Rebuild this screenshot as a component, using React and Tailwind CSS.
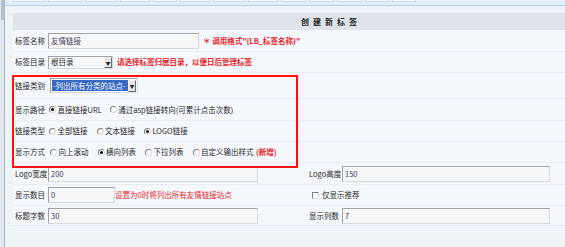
const tabs = [32, 34, 32, 30, 24, 30, 32, 30, 25, 25, 25, 24, 24]

function Radio({ checked }) {
  return (
    <span className="inline-flex h-[7px] w-[7px] shrink-0 items-center justify-center rounded-full border border-[#7d7d7d] border-b-[#dcdcdc] border-r-[#dcdcdc] bg-white">
      {checked && <span className="h-[3px] w-[3px] rounded-full bg-black" />}
    </span>
  )
}

function Option({ checked, children }) {
  return (
    <span className="flex items-center gap-[1.5px]">
      <Radio checked={checked} />
      <span>{children}</span>
    </span>
  )
}

function Input({ value, w }) {
  return (
    <div className={`flex h-[16px] items-center border border-[#9ea5ab] border-b-[#d5d8db] border-r-[#d5d8db] bg-[#f7f7f7] pl-[2px] text-[#4a3a5a] ${w}`}>
      {value}
    </div>
  )
}

function Row({ label, h, children, line = true }) {
  return (
    <div className={`flex items-center pl-[2px] ${h} ${line ? 'border-b border-[#e7edf3]' : ''}`}>
      <span className="w-[33px] shrink-0 whitespace-nowrap">{label}</span>
      {children}
    </div>
  )
}

export default function App() {
  return (
    <div
      className="relative flex h-[247px] w-[565px] overflow-hidden bg-[#eef3f8] text-[7.5px] leading-none text-[#2a2a2a]"
      style={{ fontFamily: '"Noto Sans CJK SC", "Noto Sans", sans-serif' }}
    >
      {/* left strip */}
      <div className="w-[5px] shrink-0 border-r border-[#aab6c2] bg-[#dfe6ed]">
        <div className="mx-auto h-[20px] w-[3px] bg-[#b4bec8]" />
      </div>

      <div className="flex flex-1 flex-col">
        {/* tab strip */}
        <div className="flex h-[6px] gap-[3px] border-b border-[#b3cfe6] bg-[#e3eef8] pl-[8px]">
          {tabs.map((w, i) => (
            <div key={i} className="h-[2px] border-x border-b border-[#c9dcec] bg-[#f4f8fc]" style={{ width: w }} />
          ))}
        </div>
        <div className="h-[6px]" />

        {/* form table */}
        <div className="ml-[8px] w-[600px] bg-[#f4f7fb]">
          <div className="flex h-[18px] items-center justify-center border-t border-[#eef1f4] bg-[#dde3e8] pl-[36px] text-[8px] font-bold tracking-[4px] text-[#222]">
            创建新标签
          </div>

          <Row label="标签名称" h="h-[22px]">
            <Input value="友情链接" w="w-[151px]" />
            <span className="ml-[4px] font-bold text-[#e8262a]">＊ 调用格式"{'{'}LB_标签名称{'}'}"</span>
          </Row>

          <Row label="标签目录" h="h-[21px]">
            <div className="flex h-[13px] w-[65px] items-center border border-[#9ea5ab] border-b-[#d5d8db] border-r-[#d5d8db] bg-[#f7f7f7]">
              <span className="flex-1 pl-[2px]">根目录</span>
              <span className="flex h-[11px] w-[8px] items-center justify-center border border-[#f4f4f4] border-b-[#6e6e6e] border-r-[#6e6e6e] bg-[#e4e4e4] text-[5px]">▼</span>
            </div>
            <span className="ml-[4px] font-bold text-[#e8262a]">请选择标签归属目录，以便日后管理标签</span>
          </Row>

          <Row label="链接类别" h="h-[26px]">
            <div className="ml-[2px] flex h-[15px] w-[88px] items-center border border-[#9ea5ab] border-b-[#d5d8db] border-r-[#d5d8db] bg-white p-[1px]">
              <span className="flex h-full flex-1 items-center whitespace-nowrap bg-[#3568c4] pl-[1px] text-white">-列出所有分类的站点-</span>
              <span className="flex h-[12px] w-[8px] items-center justify-center border border-[#f4f4f4] border-b-[#6e6e6e] border-r-[#6e6e6e] bg-[#e4e4e4] text-[5px]">▼</span>
            </div>
          </Row>

          <Row label="显示路径" h="h-[22px]">
            <div className="ml-[1px] flex items-center gap-[8px]">
              <Option checked>直接链接URL</Option>
              <Option>通过asp链接转向(可累计点击次数)</Option>
            </div>
          </Row>

          <Row label="链接类型" h="h-[21px]">
            <div className="ml-[1px] flex items-center gap-[9px]">
              <Option>全部链接</Option>
              <Option>文本链接</Option>
              <Option checked>LOGO链接</Option>
            </div>
          </Row>

          <Row label="显示方式" h="h-[21px]">
            <div className="ml-[2px] flex items-center gap-[9px]">
              <Option>向上滚动</Option>
              <Option checked>横向列表</Option>
              <Option>下拉列表</Option>
              <span className="flex items-center gap-[1.5px]">
                <Radio />
                <span>自定义输出样式</span>
                <span className="ml-[1px] font-bold text-[#e8262a]">(新增)</span>
              </span>
            </div>
          </Row>

          <div className="flex h-[22px] items-center border-b border-[#e7edf3]">
            <div className="flex w-[294px] items-center pl-[2px]">
              <span className="w-[33px] shrink-0">Logo宽度</span>
              <Input value="200" w="w-[210px]" />
            </div>
            <div className="flex items-center pl-[2px]">
              <span className="w-[33px] shrink-0">Logo高度</span>
              <Input value="150" w="w-[208px]" />
            </div>
          </div>

          <div className="flex h-[21px] items-center border-b border-[#e7edf3]">
            <div className="flex w-[294px] items-center pl-[2px]">
              <span className="w-[33px] shrink-0">显示数目</span>
              <Input value="0" w="w-[67px]" />
              <span className="text-[#e8262a]">设置为0时将列出所有友情链接站点</span>
            </div>
            <div className="flex items-center gap-[3px] pl-[5px]">
              <span className="h-[7px] w-[7px] border border-[#7d7d7d] border-b-[#dcdcdc] border-r-[#dcdcdc] bg-white" />
              <span>仅显示推荐</span>
            </div>
          </div>

          <div className="flex h-[19px] items-center">
            <div className="flex w-[294px] items-center pl-[2px]">
              <span className="w-[33px] shrink-0">标题字数</span>
              <Input value="30" w="w-[210px]" />
            </div>
            <div className="flex items-center pl-[2px]">
              <span className="w-[33px] shrink-0">显示列数</span>
              <Input value="7" w="w-[208px]" />
            </div>
          </div>
        </div>
        <div className="ml-[8px] border-t border-[#e2e8ee]" />
      </div>

      {/* red annotation box */}
      <div className="pointer-events-none absolute left-[12px] top-[75px] h-[93px] w-[286px] border-2 border-[#ff1010]" />
    </div>
  )
}
